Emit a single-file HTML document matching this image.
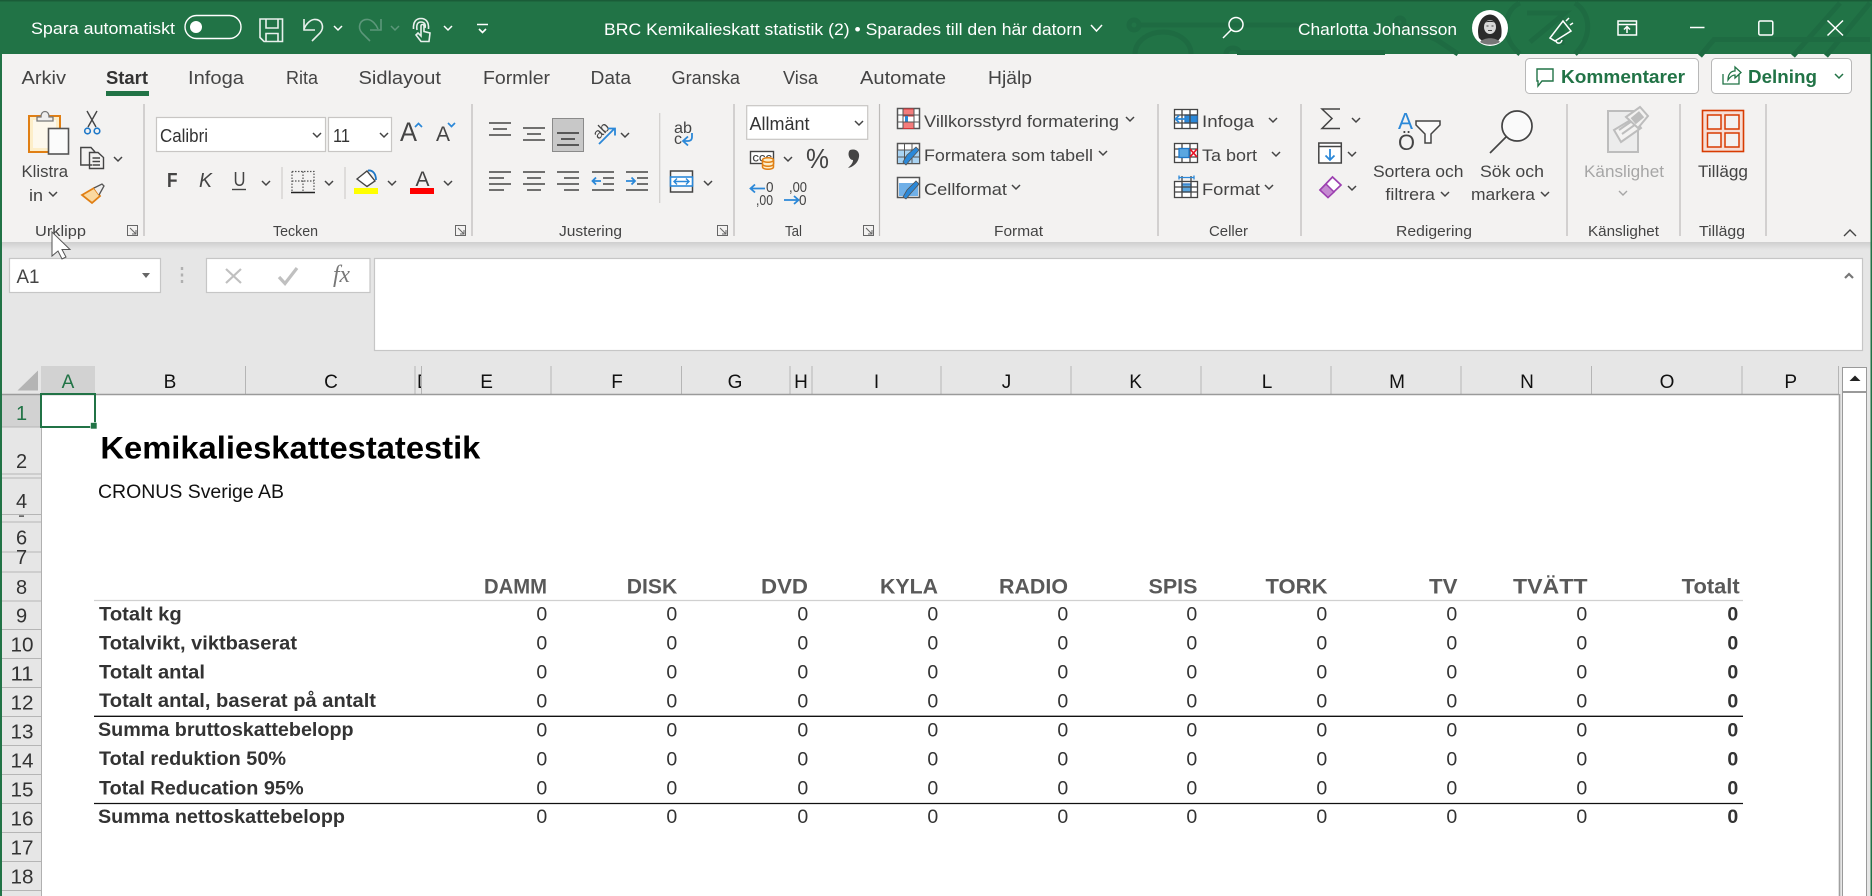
<!DOCTYPE html>
<html lang="sv"><head><meta charset="utf-8"><title>BRC Kemikalieskatt statistik</title>
<style>
html,body{margin:0;padding:0;background:#fff;overflow:hidden}
svg{display:block}
text{font-family:"Liberation Sans",Arial,sans-serif;white-space:pre}
.t{fill:#fff;font-size:16.5px}
.r{fill:#444;font-size:17px}
.tab{fill:#444;font-size:18px}
.g{fill:#444;font-size:15px}
.rh{fill:#333;font-size:20px;text-anchor:middle}
.ch{fill:#111;font-size:19px;text-anchor:middle}
.lb{fill:#333;font-size:19.5px;font-weight:bold}
.hd{fill:#595959;font-size:21.5px;font-weight:bold}
.z{fill:#333;font-size:19.5px}
.ln{stroke:#444;stroke-width:1.6;fill:none}
.bl{stroke:#2b88d8;stroke-width:1.8;fill:none}
</style></head><body>
<svg xmlns="http://www.w3.org/2000/svg" width="1872" height="896" viewBox="0 0 1872 896">
<defs>
<linearGradient id="sh" x1="0" y1="0" x2="0" y2="1"><stop offset="0" stop-color="#cfcfcf"/><stop offset="1" stop-color="#e6e6e6"/></linearGradient>
<path id="c" d="M-4,-2 L0,2 L4,-2" fill="none" stroke="#444" stroke-width="1.5"/>
<path id="cw" d="M-4,-2 L0,2 L4,-2" fill="none" stroke="#fff" stroke-width="1.5"/>
<path id="dl" d="M0.5,0.5H10.5V10.5H0.5ZM3,3L9,9M9,5V9H5" fill="none" stroke="#666" stroke-width="1"/>
<clipPath id="cd"><rect x="415.5" y="366" width="5.5" height="28"/></clipPath>
</defs>

<!-- backgrounds -->
<rect width="1872" height="896" fill="#fff"/>
<rect width="1872" height="54" fill="#217346"/>
<rect width="1872" height="1.5" fill="#1a5c38"/>
<rect y="54" width="1872" height="188" fill="#f3f2f1"/>
<rect y="242" width="1872" height="153" fill="#e6e6e6"/>
<rect y="242" width="1872" height="8" fill="url(#sh)"/>

<!-- title bar decoration -->
<g fill="none" stroke="#1e6b42" stroke-width="5">
<path d="M1139,25H1300"/><circle cx="1134" cy="25" r="5"/>
<path d="M1135,54A28,22 0 0 1 1191,54"/>
<path d="M1237,52.500H1385"/><path d="M1226,54A7,6 0 0 1 1240,54"/>
<circle cx="1400" cy="22" r="4"/><path d="M1403,25L1437,40L1458,54"/>
<path d="M1520,54C1500,38 1503,10 1520,3M1575,3C1592,14 1592,38 1575,54"/>
<path d="M1527,13H1565L1530,42"/><path d="M1562,18V45"/>
<path d="M1700,56L1714,39.500H1870"/><path d="M1840,3L1793,56"/><path d="M1870,3L1826,56"/>
</g>

<!-- title bar left -->
<text class="t" x="31" y="34" textLength="144" lengthAdjust="spacingAndGlyphs">Spara automatiskt</text>
<rect x="185" y="15.500" width="56" height="23" rx="11.500" fill="none" stroke="#fff" stroke-width="1.4"/>
<circle cx="196" cy="27" r="6" fill="#fff"/>
<g fill="none" stroke="#e8f0ec" stroke-width="1.6">
<path d="M260,19H282.500V41.500H264L260,37.500Z"/><path d="M266,19V28H278V19"/><path d="M266,41V33.500H278V41"/>
<path d="M312,41L320,33C325,27 322,19 314,19.500C310,20 306,24 304,29"/><path d="M304,19V30H315"/>
<path d="M413.500,29C413,22 416,18.500 421,18.500C426,18.500 429,22 428.500,29"/>
<path d="M417,30C416,24 418,22 421,22C424,22 426,24 425,28"/>
<path d="M421,26V36L418,33L416,35L421,41.500H429L430,33L424,31.500V26C424,24 421,24 421,26Z" fill="#217346"/>
</g>
<g fill="none" stroke="#5c977a" stroke-width="1.6">
<path d="M370,41L362,33C357,27 360,19 368,19.500C372,20 376,24 378,29"/><path d="M381,19V30H370"/>
</g>
<use href="#cw" x="338" y="28"/><use href="#cw" x="448" y="28"/>
<path d="M391,26L395,30L399,26" fill="none" stroke="#5c977a" stroke-width="1.5"/>
<path d="M477,24.500H488" stroke="#fff" stroke-width="1.5"/>
<path d="M479,29L482.500,32.500L486,29" fill="none" stroke="#fff" stroke-width="1.6"/>

<!-- title -->
<text class="t" x="604" y="35" textLength="478" lengthAdjust="spacingAndGlyphs">BRC Kemikalieskatt statistik (2) • Sparades till den här datorn</text>
<path d="M1091,25L1096.500,31L1102,25" fill="none" stroke="#fff" stroke-width="1.5"/>
<g fill="none" stroke="#fff" stroke-width="1.5"><circle cx="1236" cy="24.500" r="7"/><path d="M1231,30L1223,38"/></g>
<text class="t" x="1298" y="35" textLength="159" lengthAdjust="spacingAndGlyphs">Charlotta Johansson</text>
<circle cx="1490" cy="28" r="18" fill="#fff"/>
<path d="M1479,38C1476,28 1480,15 1490,14.500C1500,15 1503,28 1501,37L1498,41H1482Z" fill="#2a2a2a"/>
<ellipse cx="1490" cy="27" rx="6" ry="7" fill="#d8d8d8"/>
<path d="M1484,23C1487,20 1493,20 1496,23C1493,21.500 1487,21.500 1484,23Z" fill="#222"/>
<path d="M1486.500,26H1488.500M1491.500,26H1493.500M1488,30.500H1492" stroke="#444" stroke-width="1"/>
<path d="M1480,42C1484,37 1496,37 1500,42C1495,45.500 1485,45.500 1480,42Z" fill="#777"/>
<path d="M1550,38L1563,21L1571,31L1555,41ZM1556,41C1557,44 1561,44 1562,40" fill="none" stroke="#fff" stroke-width="1.5"/>
<path d="M1566,21L1569,18M1570,25L1573,23" stroke="#fff" stroke-width="1.5"/>
<g fill="none" stroke="#fff" stroke-width="1.5">
<rect x="1618" y="21" width="18.500" height="14"/><path d="M1618,24.500H1636"/><path d="M1627,33V27M1624,29.500L1627,26.500L1630,29.500"/>
<path d="M1690,27.500H1704.500"/>
<rect x="1758.800" y="21" width="14" height="14" rx="1.500"/>
<path d="M1827.500,20.500L1843,35.500M1843,20.500L1827.500,35.500"/>
</g>

<!-- tabs -->
<text class="tab" x="21.500" y="84" textLength="44.500" lengthAdjust="spacingAndGlyphs">Arkiv</text>
<text class="tab" x="106" y="84" textLength="42" lengthAdjust="spacingAndGlyphs" font-weight="bold" style="fill:#333">Start</text>
<rect x="106" y="91" width="43" height="5" fill="#217346"/>
<text class="tab" x="188" y="84" textLength="56" lengthAdjust="spacingAndGlyphs">Infoga</text>
<text class="tab" x="286" y="84" textLength="32" lengthAdjust="spacingAndGlyphs">Rita</text>
<text class="tab" x="358.500" y="84" textLength="82.500" lengthAdjust="spacingAndGlyphs">Sidlayout</text>
<text class="tab" x="483" y="84" textLength="67" lengthAdjust="spacingAndGlyphs">Formler</text>
<text class="tab" x="590.500" y="84" textLength="40.500" lengthAdjust="spacingAndGlyphs">Data</text>
<text class="tab" x="671.500" y="84" textLength="68.500" lengthAdjust="spacingAndGlyphs">Granska</text>
<text class="tab" x="783" y="84" textLength="35" lengthAdjust="spacingAndGlyphs">Visa</text>
<text class="tab" x="860" y="84" textLength="86" lengthAdjust="spacingAndGlyphs">Automate</text>
<text class="tab" x="988" y="84" textLength="44" lengthAdjust="spacingAndGlyphs">Hjälp</text>

<!-- Kommentarer / Delning -->
<rect x="1525.500" y="58.500" width="173" height="35" rx="4" fill="#fff" stroke="#b8b8b8"/>
<path d="M1537,69H1553V81H1542L1538,86V81H1537Z" fill="none" stroke="#217346" stroke-width="1.4"/>
<text x="1561" y="83" font-size="18.500" font-weight="bold" fill="#217346" textLength="124" lengthAdjust="spacingAndGlyphs">Kommentarer</text>
<rect x="1711.500" y="58.500" width="140" height="35" rx="4" fill="#fff" stroke="#b8b8b8"/>
<path d="M1723,74V84H1739V74M1728,80C1728,74 1731,71 1735,71V67L1741,72.500L1735,78V75C1732,75 1730,77 1728,80Z" fill="none" stroke="#217346" stroke-width="1.3"/>
<text x="1748" y="83" font-size="18.500" font-weight="bold" fill="#217346" textLength="69" lengthAdjust="spacingAndGlyphs">Delning</text>
<path d="M1835,74L1839,78L1843,74" fill="none" stroke="#217346" stroke-width="1.5"/>

<!-- ribbon group separators -->
<g stroke="#bdbbb9" stroke-width="1.2">
<path d="M144,104V236M472,104V236M734,104V236M879.500,104V236M1158,104V236M1301,104V236M1567,104V236M1680,104V236M1766,104V236"/>
<path d="M282,167V199M345,167V199M659.700,113V203" stroke="#d0cecc"/>
</g>

<!-- group labels -->
<text class="g" x="35" y="236" textLength="51" lengthAdjust="spacingAndGlyphs">Urklipp</text>
<text class="g" x="273" y="236" textLength="45" lengthAdjust="spacingAndGlyphs">Tecken</text>
<text class="g" x="559" y="236" textLength="63" lengthAdjust="spacingAndGlyphs">Justering</text>
<text class="g" x="785" y="236" textLength="17" lengthAdjust="spacingAndGlyphs">Tal</text>
<text class="g" x="994" y="236" textLength="49" lengthAdjust="spacingAndGlyphs">Format</text>
<text class="g" x="1209" y="236" textLength="39" lengthAdjust="spacingAndGlyphs">Celler</text>
<text class="g" x="1396" y="236" textLength="76" lengthAdjust="spacingAndGlyphs">Redigering</text>
<text class="g" x="1588" y="236" textLength="71" lengthAdjust="spacingAndGlyphs">Känslighet</text>
<text class="g" x="1699" y="236" textLength="46" lengthAdjust="spacingAndGlyphs">Tillägg</text>
<use href="#dl" x="127" y="225"/><use href="#dl" x="455" y="225"/><use href="#dl" x="717" y="225"/><use href="#dl" x="863" y="225"/>
<path d="M1844,236L1850,230L1856,236" fill="none" stroke="#444" stroke-width="1.4"/>

<!-- Urklipp -->
<rect x="29" y="116" width="31" height="36" fill="#fdeec9" stroke="#e07f14" stroke-width="2"/>
<rect x="33" y="120" width="23" height="28" fill="#fdf8ec"/>
<path d="M37,121V117H41C41,113 43,111.500 45,111.500C47,111.500 49,113 49,117H53V121Z" fill="#eee" stroke="#777" stroke-width="1.3"/>
<rect x="48.500" y="128.500" width="20" height="25.500" fill="#fbfbfb" stroke="#555" stroke-width="1.6"/>
<path d="M87,111L96,127M97,111L88,127" stroke="#444" stroke-width="1.4" fill="none"/>
<circle cx="87.500" cy="131" r="2.800" fill="none" stroke="#1e78c8" stroke-width="1.6"/><circle cx="97" cy="131" r="2.800" fill="none" stroke="#1e78c8" stroke-width="1.6"/>
<path d="M92,165H80.800V147.500H91L95,152M89.500,152.500H98L103.500,157.500V168.500H89.500ZM92.500,158H100M92.500,161.500H100M92.500,165H100" fill="none" stroke="#444" stroke-width="1.4"/>
<use href="#c" x="118" y="159"/>
<path d="M82,195L94,188L100,196L92,203Z" fill="#fbd9a0" stroke="#e07f14" stroke-width="1.8"/>
<path d="M94,188L102,184L104,186L99,195" fill="#eee" stroke="#555" stroke-width="1.3"/>
<text class="r" x="21.500" y="177" textLength="46.500" lengthAdjust="spacingAndGlyphs">Klistra</text>
<text class="r" x="29" y="201" textLength="14" lengthAdjust="spacingAndGlyphs">in</text>
<use href="#c" x="53" y="194"/>

<!-- Tecken -->
<rect x="156.500" y="117.500" width="169" height="34" fill="#fff" stroke="#c8c6c4" stroke-width="1.2"/>
<text x="160" y="142" textLength="48" lengthAdjust="spacingAndGlyphs" style="fill:#333;font-size:18px">Calibri</text>
<use href="#c" x="317" y="135"/>
<rect x="328.500" y="117.500" width="63" height="34" fill="#fff" stroke="#c8c6c4" stroke-width="1.2"/>
<text x="333" y="142" textLength="17" lengthAdjust="spacingAndGlyphs" style="fill:#333;font-size:18px">11</text>
<use href="#c" x="384" y="135"/>
<text x="400" y="141" font-size="27" fill="#444" textLength="17" lengthAdjust="spacingAndGlyphs">A</text>
<path d="M415,127L418.500,123.500L422,127" fill="none" stroke="#2b88d8" stroke-width="1.7"/>
<text x="436" y="141" font-size="21" fill="#444" textLength="14" lengthAdjust="spacingAndGlyphs">A</text>
<path d="M448,123L451.500,126.500L455,123" fill="none" stroke="#2b88d8" stroke-width="1.7"/>
<text x="167" y="187" font-size="20" font-weight="bold" fill="#444" textLength="10.500" lengthAdjust="spacingAndGlyphs">F</text>
<text x="199" y="187" font-size="20" font-style="italic" fill="#444" textLength="13" lengthAdjust="spacingAndGlyphs">K</text>
<text x="233.500" y="186" font-size="20" fill="#444" textLength="12" lengthAdjust="spacingAndGlyphs">U</text>
<path d="M232,189.500H246" stroke="#444" stroke-width="1.4"/>
<use href="#c" x="266" y="183"/>
<path d="M292,171.500H314V191M292,171.500V191M303,171.500V191M292,181H314" fill="none" stroke="#555" stroke-width="1.2" stroke-dasharray="1.500 1.500"/>
<path d="M291,192.500H315" stroke="#222" stroke-width="1.6"/>
<use href="#c" x="329" y="183"/>
<path d="M357,179L367,171L375,181L367,186.500Z" fill="#fff" stroke="#444" stroke-width="1.4"/>
<path d="M368,170.500C373,170 376,174 376,180" fill="none" stroke="#1e78c8" stroke-width="1.8"/>
<rect x="354" y="188" width="24" height="6" fill="#ff0"/>
<use href="#c" x="392" y="183"/>
<text x="415.500" y="186" font-size="21" fill="#444" textLength="14" lengthAdjust="spacingAndGlyphs">A</text>
<rect x="410" y="188" width="24" height="6" fill="#f00"/>
<use href="#c" x="448" y="183"/>

<!-- Justering -->
<rect x="552.500" y="118.500" width="31" height="33" fill="#c8c8c8" stroke="#8a8a8a"/>
<g stroke="#444" stroke-width="1.6">
<path d="M489,123H511M493,129H507M489,135H511"/>
<path d="M523,128H545M527,134H541M523,140H545"/>
<path d="M557,133H579M561,139H575M557,145H579" stroke="#333"/>
<path d="M489,172H511M489,178H504M489,184H511M489,190H504"/>
<path d="M523,172H545M527,178H541M523,184H545M527,190H541"/>
<path d="M557,172H579M564,178H579M557,184H579M564,190H579"/>
<path d="M592,172H614M603,178H614M603,184H614M592,190H614"/>
<path d="M626,172H648M637,178H648M637,184H648M626,190H648"/>
</g>
<path d="M601,181H592.500M596,177.500L592.500,181L596,184.500M626,181H635M631.500,177.500L635,181L631.500,184.500" fill="none" stroke="#2b88d8" stroke-width="1.8"/>
<text x="592" y="136" font-size="15" fill="#444" transform="rotate(-45 600 130)">ab</text>
<path class="bl" d="M599,144L614,129M608,128.500H615V135.500"/>
<use href="#c" x="625" y="135"/>
<text x="674" y="133" font-size="16" fill="#444" textLength="18" lengthAdjust="spacingAndGlyphs">ab</text>
<text x="674" y="144" font-size="16" fill="#444">c</text>
<path class="bl" d="M692,133V137C692,140 690,141 688,141H684M688,136.500L683,141L688,145.500"/>
<rect x="670.500" y="171" width="22" height="21" fill="#f8f8f8" stroke="#444" stroke-width="1.5"/>
<rect x="670.500" y="177" width="22" height="9" fill="#fff" stroke="#2b88d8" stroke-width="1.6"/>
<path d="M674,181.500H689M677,178.500L674,181.500L677,184.500M686,178.500L689,181.500L686,184.500" fill="none" stroke="#2b88d8" stroke-width="1.4"/>
<use href="#c" x="708" y="183"/>

<!-- Tal -->
<rect x="746.700" y="105.700" width="121" height="33.600" fill="#fff" stroke="#c8c6c4" stroke-width="1.2"/>
<text x="749.500" y="130" font-size="18" fill="#333" textLength="60" lengthAdjust="spacingAndGlyphs">Allmänt</text>
<use href="#c" x="859" y="123"/>
<rect x="750.500" y="151.500" width="23" height="12" fill="#fff" stroke="#444" stroke-width="1.4"/>
<text x="752.500" y="161.500" font-size="9" font-weight="bold" fill="#444">CCC</text>
<path d="M762.500,160V167C762.500,170 773.500,170 773.500,167V160C773.500,157 762.500,157 762.500,160ZM762.500,160C762.500,163 773.500,163 773.500,160M762.500,164C762.500,167 773.500,167 773.500,164" fill="#fdeec9" stroke="#e07f14" stroke-width="1.5"/>
<use href="#c" x="788" y="159"/>
<text x="806" y="168" font-size="28" fill="#444" textLength="23" lengthAdjust="spacingAndGlyphs">%</text>
<path d="M850,150C856,148 860,152 859,157C858,163 853,167 848,168C851,165 853,163 853,160C849,160 847,153 850,150Z" fill="#444"/>
<path class="bl" d="M765,188.500H751M755,184.500L750.500,188.500L755,192.500"/>
<text x="766" y="192" font-size="15" fill="#444" textLength="7.500" lengthAdjust="spacingAndGlyphs">0</text>
<text x="756" y="205" font-size="15" fill="#444" textLength="17" lengthAdjust="spacingAndGlyphs">,00</text>
<text x="789" y="192" font-size="15" fill="#444" textLength="18" lengthAdjust="spacingAndGlyphs">,00</text>
<path class="bl" d="M784,200H798M794,196L798.500,200L794,204"/>
<text x="799" y="205" font-size="15" fill="#444" textLength="7.500" lengthAdjust="spacingAndGlyphs">0</text>

<!-- Format -->
<g>
<rect x="897.500" y="108.500" width="22" height="20" fill="#fff" stroke="#555" stroke-width="1.5"/>
<rect x="903" y="109" width="11" height="7" fill="#f47c7c" stroke="#d13438"/>
<rect x="905" y="116" width="3" height="6" fill="#2b88d8"/>
<rect x="903" y="122" width="11" height="6.500" fill="#f47c7c" stroke="#d13438"/>
<path d="M897.500,115H919.500M897.500,122H919.500M903,108.500V128.500M914,108.500V128.500" stroke="#555" fill="none"/>
<rect x="897.500" y="143.500" width="22" height="20" fill="#fff" stroke="#555" stroke-width="1.5"/>
<rect x="898" y="150" width="21" height="13" fill="#a9d3f2"/>
<path d="M897.500,150H919.500M897.500,157H919.500M904.500,143.500V163.500M912,143.500V163.500" stroke="#555" fill="none"/>
<path d="M903,162L907,155L916,147L919,150L911,159L906,165Z" fill="#2b88d8" stroke="#555" stroke-width=".8"/>
<rect x="897.500" y="177.500" width="22" height="20" fill="#fff" stroke="#555" stroke-width="1.5"/>
<rect x="899" y="183" width="19" height="13" fill="#70b0e8"/>
<path d="M903,197L907,190L916,181L919,184L911,193L906,199Z" fill="#2b88d8" stroke="#555" stroke-width=".8"/>
</g>
<text class="r" x="924" y="127" textLength="195" lengthAdjust="spacingAndGlyphs">Villkorsstyrd formatering</text>
<use href="#c" x="1130" y="119"/>
<text class="r" x="924" y="161" textLength="169" lengthAdjust="spacingAndGlyphs">Formatera som tabell</text>
<use href="#c" x="1103" y="153"/>
<text class="r" x="924" y="195" textLength="83" lengthAdjust="spacingAndGlyphs">Cellformat</text>
<use href="#c" x="1016" y="187"/>

<!-- Celler -->
<g fill="none" stroke="#444" stroke-width="1.3">
<rect x="1174.500" y="109.500" width="23" height="19" fill="#fff"/>
<rect x="1185" y="115" width="12" height="8" fill="#2b88d8" stroke="#2b78c8"/>
<path d="M1174.500,115H1197.500M1174.500,123H1197.500M1182,109.500V128.500M1190,109.500V128.500"/>
<path d="M1175,119H1187M1179,115.500L1175.500,119L1179,122.500" stroke="#2b88d8" stroke-width="1.8"/>
<rect x="1174.500" y="143.500" width="23" height="19" fill="#fff"/>
<path d="M1174.500,149H1197.500M1174.500,157H1197.500M1182,143.500V162.500M1190,143.500V162.500"/>
<rect x="1179" y="148.500" width="10" height="9" fill="#5ba7e0" stroke="#1e78c8"/>
<path d="M1190,149L1197,157M1197,149L1190,157" stroke="#e81123" stroke-width="1.7"/>
<rect x="1174.500" y="181.500" width="23" height="16" fill="#fff"/>
<rect x="1182" y="184" width="9" height="8" fill="#5ba7e0" stroke="#2b78c8"/>
<path d="M1174.500,187H1197.500M1174.500,192H1197.500M1182,176V197.500M1191,176V197.500"/>
<path d="M1179,177.500H1194M1179,175.500V179.500M1194,175.500V179.500" stroke="#2b88d8"/>
</g>
<text class="r" x="1202" y="127" textLength="52" lengthAdjust="spacingAndGlyphs">Infoga</text><use href="#c" x="1273" y="120"/>
<text class="r" x="1202" y="161" textLength="55" lengthAdjust="spacingAndGlyphs">Ta bort</text><use href="#c" x="1276" y="154"/>
<text class="r" x="1202" y="195" textLength="58" lengthAdjust="spacingAndGlyphs">Format</text><use href="#c" x="1269" y="187"/>

<!-- Redigering -->
<path d="M1340,109H1322L1332,118.500L1322,128.500H1340" fill="none" stroke="#444" stroke-width="1.5"/>
<use href="#c" x="1356" y="120"/>
<rect x="1318.800" y="143" width="22.500" height="20" fill="#fff" stroke="#444" stroke-width="1.5"/>
<path d="M1318.800,146.500H1341.300" stroke="#444" stroke-width="1.5"/>
<path d="M1330,149V160M1325.500,155.500L1330,160L1334.500,155.500" fill="none" stroke="#2b88d8" stroke-width="1.8"/>
<use href="#c" x="1352" y="154"/>
<path d="M1320,190L1332.500,177L1341,185L1328,197.500Z" fill="#fff" stroke="#9c3fb0" stroke-width="1.7"/>
<path d="M1320,190L1326,184L1334,192L1328,197.500Z" fill="#c58ad1" stroke="#9c3fb0" stroke-width="1.5"/>
<use href="#c" x="1352" y="188"/>
<text x="1398" y="129" font-size="23" fill="#2b88d8" textLength="15" lengthAdjust="spacingAndGlyphs">A</text>
<text x="1398" y="150" font-size="22" fill="#444" textLength="17" lengthAdjust="spacingAndGlyphs">Ö</text>
<path d="M1416,121H1440V125L1431,134V143H1425V134L1416,125Z" fill="#fafafa" stroke="#444" stroke-width="1.5"/>
<text class="r" x="1373" y="177" textLength="90.500" lengthAdjust="spacingAndGlyphs">Sortera och</text>
<text class="r" x="1385.400" y="200" textLength="49.600" lengthAdjust="spacingAndGlyphs">filtrera</text><use href="#c" x="1445" y="194"/>
<circle cx="1517" cy="126" r="15" fill="#fafafa" stroke="#444" stroke-width="1.7"/>
<path d="M1506,137L1490,153" stroke="#444" stroke-width="1.7"/>
<text class="r" x="1480" y="177" textLength="64" lengthAdjust="spacingAndGlyphs">Sök och</text>
<text class="r" x="1471" y="200" textLength="64" lengthAdjust="spacingAndGlyphs">markera</text><use href="#c" x="1545" y="194"/>

<!-- Känslighet -->
<path d="M1608,111H1638V152H1608Z" fill="#ececec" stroke="#bdbdbd" stroke-width="2"/>
<path d="M1614,130L1634,118L1641,128L1621,142Z" fill="#f3f2f1" stroke="#bdbdbd" stroke-width="2"/>
<path d="M1619,130L1632,121M1622,134L1636,124" stroke="#bdbdbd" stroke-width="2"/>
<path d="M1626,117L1640,107L1648,116L1638,128Z" fill="#f3f2f1" stroke="#bdbdbd" stroke-width="2"/>
<rect x="1632" y="114" width="11" height="8" transform="rotate(-40 1637 118)" fill="#bdbdbd"/>
<text class="r" x="1584" y="177" textLength="80" lengthAdjust="spacingAndGlyphs" style="fill:#a6a6a6">Känslighet</text>
<path d="M1619,191L1623,195L1627,191" fill="none" stroke="#a6a6a6" stroke-width="1.4"/>

<!-- Tillägg -->
<rect x="1702.500" y="110.500" width="41" height="41" fill="#f6ded6" stroke="#d83b01" stroke-width="1.600"/>
<g fill="#f3f2f1" stroke="#d83b01" stroke-width="1.500">
<rect x="1707.500" y="115" width="13.500" height="14"/><rect x="1725" y="115" width="14" height="14"/>
<rect x="1707.500" y="133" width="13.500" height="14"/><rect x="1725" y="133" width="14" height="14"/>
</g>
<text class="r" x="1698" y="177" textLength="50" lengthAdjust="spacingAndGlyphs">Tillägg</text>

<!-- Formula bar -->
<rect x="9.500" y="258.500" width="151" height="34" fill="#fff" stroke="#c6c6c6" stroke-width="1.200"/>
<text x="16.500" y="283" font-size="19" fill="#444" textLength="23" lengthAdjust="spacingAndGlyphs">A1</text>
<path d="M142,273H150L146,278Z" fill="#666"/>
<path d="M182,267V270M182,273.500V276.500M182,280V283" stroke="#b0b0b0" stroke-width="2.400"/>
<rect x="206.500" y="258.500" width="163.500" height="34" fill="#fff" stroke="#c6c6c6" stroke-width="1.200"/>
<path d="M226,269L241,283M241,269L226,283" stroke="#c0c0c0" stroke-width="2.200"/>
<path d="M279,277L285,283.500L297,268" fill="none" stroke="#c0c0c0" stroke-width="3.200"/>
<text x="333" y="282" font-size="24" font-style="italic" fill="#777" style="font-family:'Liberation Serif',serif" textLength="17" lengthAdjust="spacingAndGlyphs">fx</text>
<rect x="374.500" y="258.500" width="1488" height="92" fill="#fff" stroke="#c6c6c6" stroke-width="1.200"/>
<path d="M1845,278L1849,274L1853,278" fill="none" stroke="#777" stroke-width="2.200"/>

<!-- Column headers -->
<path d="M38,370.500V390.500H17.500Z" fill="#b4b4b4"/>
<rect x="41" y="366" width="54" height="28" fill="#d2d2d2"/>
<g stroke="#b5b5b5"><path d="M245.500,366V394M415,366V394M421.500,366V394M551,366V394M681.500,366V394M790,366V394M812,366V394M941,366V394M1071,366V394M1201,366V394M1331,366V394M1461,366V394M1591.500,366V394M1742,366V394M1838.500,366V394"/></g>
<text class="ch" x="68" y="388" style="fill:#217346">A</text>
<text class="ch" x="170" y="388">B</text><text class="ch" x="331" y="388">C</text>
<text x="417" y="388" font-size="19" fill="#111" clip-path="url(#cd)">D</text>
<text class="ch" x="486.600" y="388">E</text><text class="ch" x="617" y="388">F</text><text class="ch" x="735" y="388">G</text>
<text class="ch" x="801" y="388">H</text><text class="ch" x="876.500" y="388">I</text><text class="ch" x="1006.500" y="388">J</text>
<text class="ch" x="1135.600" y="388">K</text><text class="ch" x="1267" y="388">L</text><text class="ch" x="1397" y="388">M</text>
<text class="ch" x="1527" y="388">N</text><text class="ch" x="1667" y="388">O</text><text class="ch" x="1790.700" y="388">P</text>

<!-- Row headers -->
<rect x="2" y="395" width="39" height="501" fill="#e6e6e6"/>
<rect x="2" y="395" width="39" height="32" fill="#d2d2d2"/>
<path stroke="#b5b5b5" fill="none" d="M2,427H41M2,474H41M2,478H41M2,514.500H41M2,522H41M2,552H41M2,572H41M2,601H41M2,629.500H41M2,658.500H41M2,687.500H41M2,716.500H41M2,745.500H41M2,774.500H41M2,803.500H41M2,832.500H41M2,861.500H41M2,890.500H41"/>
<path d="M2,394.500H1839" stroke="#9a9a9a" stroke-width="1.500"/>
<path d="M41.500,395V896" stroke="#b0b0b0"/>
<rect x="19" y="515.500" width="5" height="1.200" fill="#333"/>
<text class="rh" x="21.500" y="420" style="fill:#217346">1</text>
<text class="rh" x="21.500" y="468">2</text>
<text class="rh" x="21.500" y="508">4</text>
<text class="rh" x="21.500" y="544.500">6</text>
<text class="rh" x="21.500" y="564">7</text>
<text class="rh" x="21.500" y="594">8</text>
<text class="rh" x="21.500" y="622.500">9</text>
<text class="rh" x="22" y="651.500" textLength="23" lengthAdjust="spacingAndGlyphs">10</text>
<text class="rh" x="22" y="680.500" textLength="23" lengthAdjust="spacingAndGlyphs">11</text>
<text class="rh" x="22" y="709.500" textLength="23" lengthAdjust="spacingAndGlyphs">12</text>
<text class="rh" x="22" y="738.500" textLength="23" lengthAdjust="spacingAndGlyphs">13</text>
<text class="rh" x="22" y="767.500" textLength="23" lengthAdjust="spacingAndGlyphs">14</text>
<text class="rh" x="22" y="796.500" textLength="23" lengthAdjust="spacingAndGlyphs">15</text>
<text class="rh" x="22" y="825.500" textLength="23" lengthAdjust="spacingAndGlyphs">16</text>
<text class="rh" x="22" y="854.500" textLength="23" lengthAdjust="spacingAndGlyphs">17</text>
<text class="rh" x="22" y="883.500" textLength="23" lengthAdjust="spacingAndGlyphs">18</text>

<!-- selection -->
<rect x="41" y="394" width="54" height="33" fill="none" stroke="#217346" stroke-width="2"/>
<rect x="90.500" y="422.500" width="6.500" height="6.500" fill="#217346" stroke="#fff" stroke-width=".6"/>

<!-- Sheet content -->
<text x="100.400" y="458.300" font-size="31.500" font-weight="bold" fill="#000" textLength="380" lengthAdjust="spacingAndGlyphs">Kemikalieskattestatestik</text>
<text x="98" y="498" font-size="19.500" fill="#111" textLength="186" lengthAdjust="spacingAndGlyphs">CRONUS Sverige AB</text>

<text class="hd" x="484" y="593.300" textLength="63" lengthAdjust="spacingAndGlyphs">DAMM</text>
<text class="hd" x="626.800" y="593.300" textLength="50.500" lengthAdjust="spacingAndGlyphs">DISK</text>
<text class="hd" x="761" y="593.300" textLength="47" lengthAdjust="spacingAndGlyphs">DVD</text>
<text class="hd" x="880" y="593.300" textLength="58" lengthAdjust="spacingAndGlyphs">KYLA</text>
<text class="hd" x="999" y="593.300" textLength="69" lengthAdjust="spacingAndGlyphs">RADIO</text>
<text class="hd" x="1148.500" y="593.300" textLength="49" lengthAdjust="spacingAndGlyphs">SPIS</text>
<text class="hd" x="1265.500" y="593.300" textLength="62" lengthAdjust="spacingAndGlyphs">TORK</text>
<text class="hd" x="1429" y="593.300" textLength="28.500" lengthAdjust="spacingAndGlyphs">TV</text>
<text class="hd" x="1513" y="593.300" textLength="74.500" lengthAdjust="spacingAndGlyphs">TVÄTT</text>
<text class="hd" x="1681.700" y="593.300" textLength="58" lengthAdjust="spacingAndGlyphs">Totalt</text>

<path d="M94,600.500H1743" stroke="#d0d0d0" stroke-width="1.200"/>
<path d="M94,716.300H1743M94,803.500H1743" stroke="#111" stroke-width="1.300"/>

<text class="lb" x="99" y="620.500" textLength="82.700" lengthAdjust="spacingAndGlyphs">Totalt kg</text>
<text class="lb" x="99" y="649.500" textLength="198" lengthAdjust="spacingAndGlyphs">Totalvikt, viktbaserat</text>
<text class="lb" x="99" y="678.500" textLength="106" lengthAdjust="spacingAndGlyphs">Totalt antal</text>
<text class="lb" x="99" y="707.200" textLength="277" lengthAdjust="spacingAndGlyphs">Totalt antal, baserat på antalt</text>
<text class="lb" x="98" y="736.200" textLength="255.600" lengthAdjust="spacingAndGlyphs">Summa bruttoskattebelopp</text>
<text class="lb" x="99" y="765.200" textLength="187" lengthAdjust="spacingAndGlyphs">Total reduktion 50%</text>
<text class="lb" x="99" y="794.500" textLength="204.600" lengthAdjust="spacingAndGlyphs">Total Reducation 95%</text>
<text class="lb" x="98" y="823" textLength="247" lengthAdjust="spacingAndGlyphs">Summa nettoskattebelopp</text>

<text class="z" x="536.400 666.400 797.400 927.400 1057.400 1186.400 1316.400 1446.400 1576.400" y="620.700">000000000</text>
<text class="z" x="536.400 666.400 797.400 927.400 1057.400 1186.400 1316.400 1446.400 1576.400" y="649.700">000000000</text>
<text class="z" x="536.400 666.400 797.400 927.400 1057.400 1186.400 1316.400 1446.400 1576.400" y="678.700">000000000</text>
<text class="z" x="536.400 666.400 797.400 927.400 1057.400 1186.400 1316.400 1446.400 1576.400" y="707.400">000000000</text>
<text class="z" x="536.400 666.400 797.400 927.400 1057.400 1186.400 1316.400 1446.400 1576.400" y="736.400">000000000</text>
<text class="z" x="536.400 666.400 797.400 927.400 1057.400 1186.400 1316.400 1446.400 1576.400" y="765.400">000000000</text>
<text class="z" x="536.400 666.400 797.400 927.400 1057.400 1186.400 1316.400 1446.400 1576.400" y="794.600">000000000</text>
<text class="z" x="536.400 666.400 797.400 927.400 1057.400 1186.400 1316.400 1446.400 1576.400" y="823.200">000000000</text>
<g font-weight="bold">
<text class="z" x="1727.400" y="620.700">0</text><text class="z" x="1727.400" y="649.700">0</text><text class="z" x="1727.400" y="678.700">0</text><text class="z" x="1727.400" y="707.400">0</text>
<text class="z" x="1727.400" y="736.400">0</text><text class="z" x="1727.400" y="765.400">0</text><text class="z" x="1727.400" y="794.600">0</text><text class="z" x="1727.400" y="823.200">0</text>
</g>

<!-- Scrollbar -->
<rect x="1839" y="394" width="32" height="502" fill="#e6e6e6"/>
<path d="M1839.500,394V896" stroke="#a0a0a0" stroke-width="1.600"/>
<rect x="1842.500" y="367.500" width="24" height="24" fill="#fff" stroke="#9a9a9a"/>
<path d="M1849.500,381L1855,375.500L1860.500,381Z" fill="#222"/>
<rect x="1842.500" y="392.500" width="24" height="510" fill="#fff" stroke="#9a9a9a"/>

<!-- Window edges -->
<rect x="0" y="54" width="2" height="842" fill="#217346"/>
<rect x="1870.500" y="54" width="1.500" height="842" fill="#217346"/>

<!-- Cursor -->
<path d="M52,232L52,256L58,251L62,259L66,257L62,249.500L70,249.500Z" fill="#fff" stroke="#555" stroke-width="1"/>
</svg>
</body></html>
